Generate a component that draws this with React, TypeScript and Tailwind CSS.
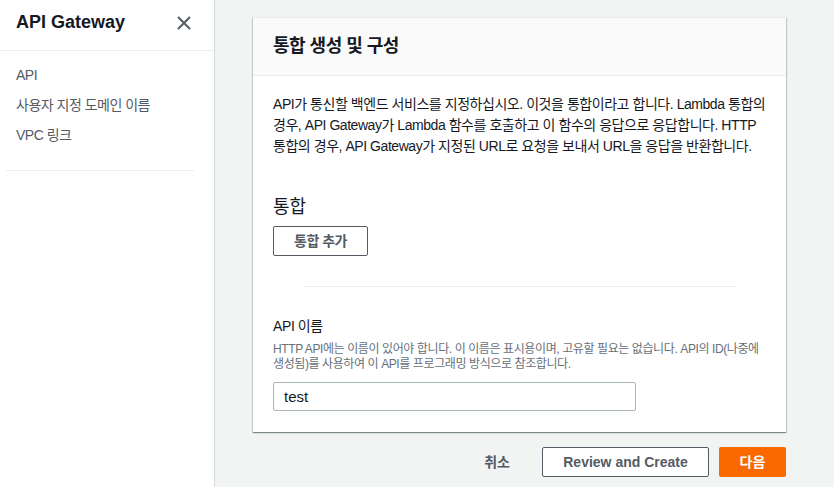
import * as React from 'react';

const font = { fontFamily: '"Liberation Sans", "Noto Sans CJK KR", sans-serif' };

const navItems = ['API', '사용자 지정 도메인 이름', 'VPC 링크'];

function CloseIcon() {
  return (
    <svg width="14" height="14" viewBox="0 0 14 14" fill="none" stroke="#545b64" strokeWidth="2">
      <path d="M1 1l12 12M13 1L1 13" />
    </svg>
  );
}

export default function App() {
  const [name, setName] = React.useState('test');

  return (
    <div
      className="flex h-[487px] w-[834px] overflow-hidden break-keep bg-[#f2f3f3] text-[#16191f]"
      style={font}
    >
      <aside className="w-[215px] shrink-0 border-r border-[#d5dbdb] bg-white">
        <div className="flex h-[51px] items-center justify-between border-b border-[#eaeded] pb-[6px] pl-[16px] pr-[23px]">
          <h2 className="text-[18px] font-bold leading-none">API Gateway</h2>
          <button type="button" aria-label="닫기" className="mt-[1px]">
            <CloseIcon />
          </button>
        </div>
        <nav className="pt-[9px]">
          <ul className="flex flex-col">
            {navItems.map((item) => (
              <li key={item} className="pl-[16px] text-[14px] leading-[30px] tracking-[-0.5px] text-[#545b64]">
                {item}
              </li>
            ))}
          </ul>
        </nav>
        <div className="ml-[6px] mt-[20px] w-[188px] border-t border-[#eaeded]" />
      </aside>

      <main className="flex-1 pl-[38px] pt-[17px]">
        <section className="w-[533px] border-t border-[#eaeded] bg-white shadow-[0_1px_1px_0_rgba(0,28,36,0.3),1px_1px_1px_0_rgba(0,28,36,0.15),-1px_1px_1px_0_rgba(0,28,36,0.15)]">
          <div className="flex h-[58px] items-center border-b border-[#eaeded] bg-[#fafafa] px-[20px]">
            <h1 className="text-[18px] font-bold tracking-[-0.5px]">통합 생성 및 구성</h1>
          </div>
          <div className="px-[20px] pb-[21px] pt-[18px]">
            <p className="whitespace-nowrap text-[14px] leading-[21px] tracking-[-0.45px]">
              API가 통신할 백엔드 서비스를 지정하십시오. 이것을 통합이라고 합니다. Lambda 통합의
              <br />
              경우, API Gateway가 Lambda 함수를 호출하고 이 함수의 응답으로 응답합니다. HTTP
              <br />
              통합의 경우, API Gateway가 지정된 URL로 요청을 보내서 URL을 응답을 반환합니다.
            </p>

            <h3 className="mt-[38px] text-[18px] leading-[24px]">통합</h3>
            <button
              type="button"
              className="mt-[7px] h-[30px] w-[95px] rounded-[2px] border border-[#545b64] text-[14px] font-bold tracking-[-0.5px] text-[#545b64]"
            >
              통합 추가
            </button>

            <div className="mx-[30px] mt-[30px] border-t border-[#eaeded]" />

            <label htmlFor="api-name" className="mt-[29px] block text-[14px] leading-[20px] tracking-[-0.4px]">
              API 이름
            </label>
            <p className="mt-[6px] whitespace-nowrap text-[12px] leading-[15px] tracking-[-0.4px] text-[#687078]">
              HTTP API에는 이름이 있어야 합니다. 이 이름은 표시용이며, 고유할 필요는 없습니다. API의 ID(나중에
              <br />
              생성됨)를 사용하여 이 API를 프로그래밍 방식으로 참조합니다.
            </p>
            <input
              id="api-name"
              value={name}
              onChange={(event) => setName(event.target.value)}
              className="mt-[10px] block h-[29px] w-[363px] rounded-[2px] border border-[#aab7b8] px-[10px] text-[15px] outline-none"
            />
          </div>
        </section>

        <div className="mt-[15px] flex w-[533px] items-center justify-end">
          <button type="button" className="mr-[32px] text-[14px] font-bold text-[#545b64]">
            취소
          </button>
          <button
            type="button"
            className="h-[30px] w-[167px] rounded-[2px] border border-[#545b64] bg-white text-[14px] font-bold text-[#545b64]"
          >
            Review and Create
          </button>
          <button
            type="button"
            className="ml-[10px] h-[30px] w-[67px] rounded-[2px] bg-[#fa6900] text-[14px] font-bold text-white"
          >
            다음
          </button>
        </div>
      </main>
    </div>
  );
}
